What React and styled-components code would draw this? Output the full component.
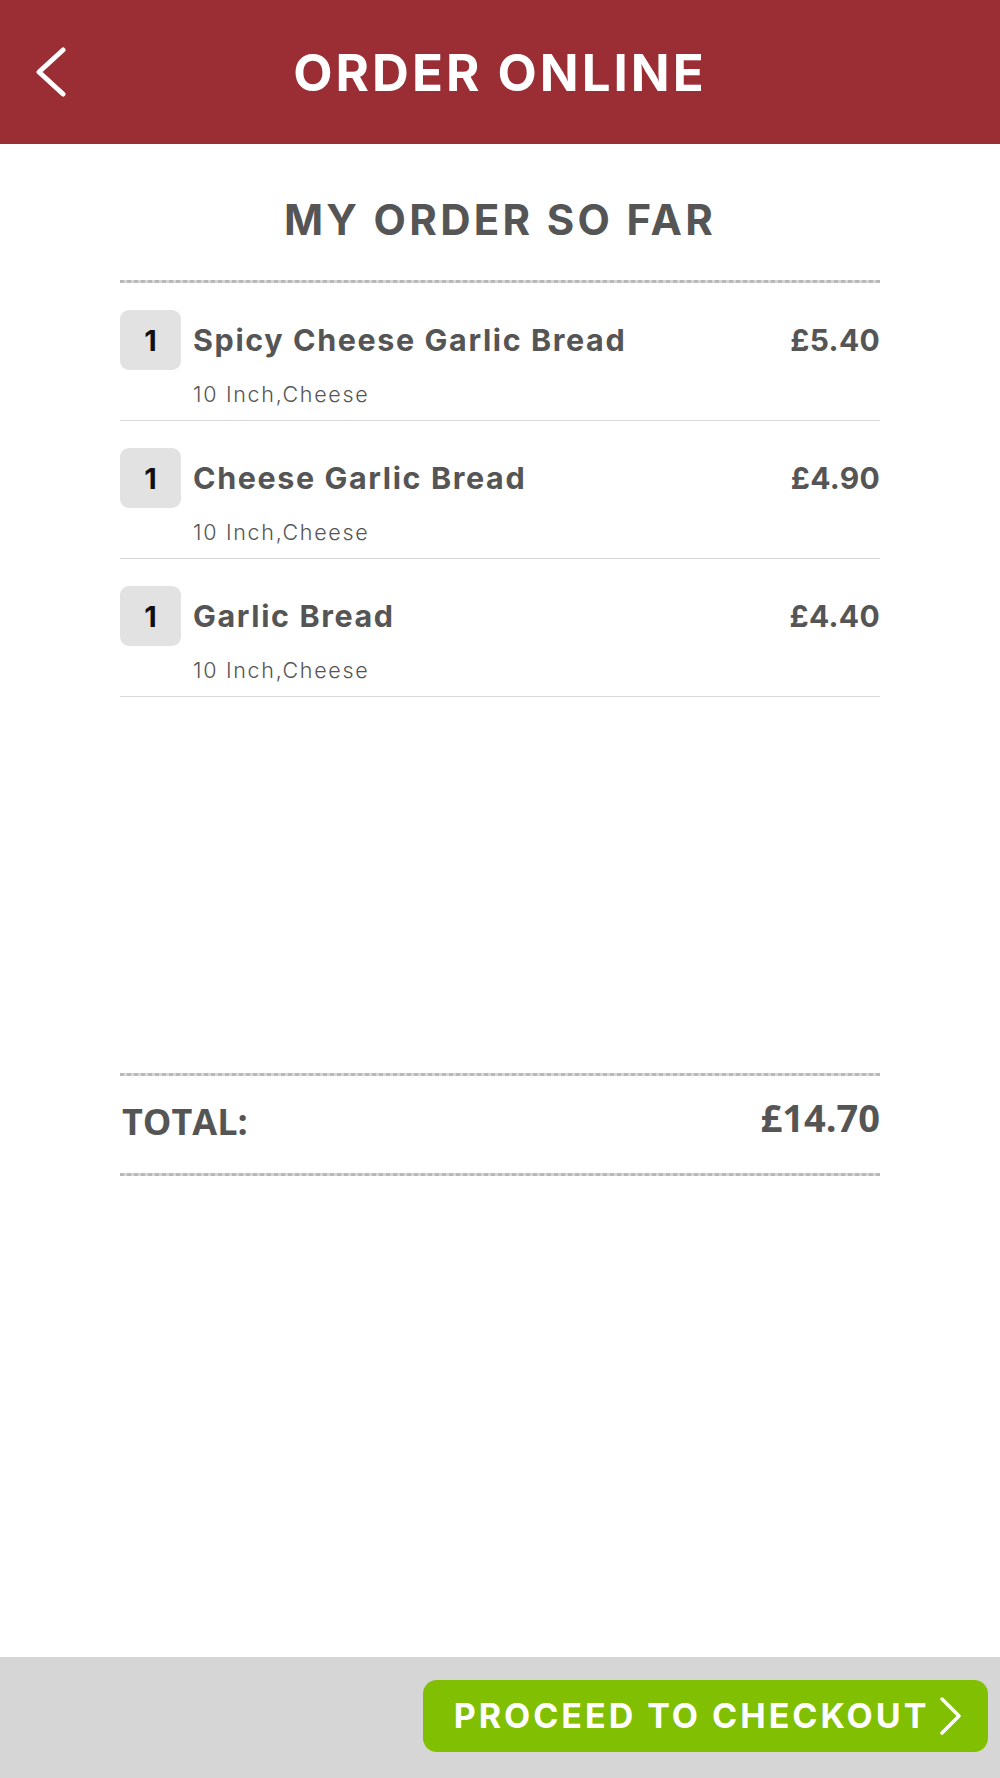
import React from "react";
import styled, { createGlobalStyle } from "styled-components";

const GlobalStyle = createGlobalStyle`
  html, body { margin: 0; padding: 0; background: #ffffff; }
  body { font-family: Inter, "Noto Sans", sans-serif; color: #555555; }
  * { box-sizing: border-box; }
`;

const Page = styled.div`
  min-height: 100vh;
  display: flex;
  flex-direction: column;
`;

const Header = styled.header`
  height: 144px;
  background: #9b2d35;
  display: grid;
  grid-template-columns: 1fr auto 1fr;
  align-items: center;
  padding: 0 36px;
`;

const BackButton = styled.button`
  justify-self: start;
  background: none;
  border: none;
  padding: 0;
  width: 30px;
  height: 50px;
  display: flex;
  cursor: pointer;
`;

const HeaderTitle = styled.h1`
  margin: 0;
  font-family: Inter, sans-serif;
  font-weight: 700;
  font-size: 51px;
  line-height: 60px;
  letter-spacing: 3px;
  color: #ffffff;
  padding-top: 2px;
`;

const Main = styled.main`
  flex: 1;
  padding: 0 120px;
  display: flex;
  flex-direction: column;
`;

const Dashed = styled.div`
  height: 3px;
  background: repeating-linear-gradient(
    to right,
    #b9b9b9 0px,
    #b9b9b9 4px,
    #d6d6d6 4px,
    #d6d6d6 7px
  );
`;

const Heading = styled.h2`
  margin: 0;
  padding: 46px 0 30px;
  text-align: center;
  font-family: Inter, sans-serif;
  font-weight: 700;
  font-size: 42px;
  line-height: 60px;
  letter-spacing: 3.3px;
  color: #555555;
`;

const ItemList = styled.ul`
  list-style: none;
  margin: 0;
  padding: 0;
  min-height: 790px;
`;

const Item = styled.li`
  display: grid;
  grid-template-columns: 61px 1fr auto;
  grid-template-rows: 60px auto;
  column-gap: 12px;
  row-gap: 11px;
  align-items: center;
  padding: 27px 0 13px;
  border-bottom: 1px solid #d8d8d8;
`;

const Qty = styled.div`
  width: 61px;
  height: 60px;
  border-radius: 9px;
  background: #e2e2e2;
  display: flex;
  align-items: center;
  justify-content: center;
  font-family: Inter, sans-serif;
  font-weight: 700;
  font-size: 29px;
  color: #111111;
`;

const ItemName = styled.div`
  font-family: Inter, sans-serif;
  font-weight: 650;
  font-size: 30.5px;
  line-height: 40px;
  letter-spacing: 1.6px;
  color: #555555;
`;

const Price = styled.div`
  font-family: Inter, sans-serif;
  font-weight: 700;
  font-size: 30px;
  line-height: 40px;
  color: #555555;
  letter-spacing: 0.3px;
`;

const Options = styled.div`
  grid-column: 2 / 4;
  font-family: Inter, sans-serif;
  font-weight: 300;
  font-size: 21.5px;
  line-height: 26px;
  letter-spacing: 1.7px;
  color: #555555;
`;

const TotalRow = styled.div`
  display: flex;
  justify-content: space-between;
  align-items: center;
  height: 97px;
`;

const TotalLabel = styled.div`
  font-family: "Open Sans", sans-serif;
  font-weight: 700;
  font-size: 36px;
  line-height: 44px;
  color: #555555;
  padding: 0 0 6px 2px;
`;

const TotalValue = styled.div`
  font-family: "Open Sans", sans-serif;
  font-weight: 700;
  font-size: 38px;
  line-height: 44px;
  color: #555555;
  padding-bottom: 15px;
`;

const Footer = styled.footer`
  height: 121px;
  background: #d6d6d6;
  display: flex;
  align-items: center;
  justify-content: flex-end;
  padding: 0 12px 4px 0;
`;

const CheckoutButton = styled.button`
  width: 565px;
  height: 72px;
  border: none;
  border-radius: 14px;
  background: #80bf02;
  display: flex;
  align-items: center;
  justify-content: center;
  gap: 10px;
  padding: 0 0 0 6px;
  cursor: pointer;
`;

const CheckoutLabel = styled.span`
  font-family: Inter, sans-serif;
  font-weight: 700;
  font-size: 34px;
  letter-spacing: 3px;
  color: #ffffff;
`;

const items = [
  { qty: 1, name: "Spicy Cheese Garlic Bread", price: "£5.40", options: "10 Inch,Cheese" },
  { qty: 1, name: "Cheese Garlic Bread", price: "£4.90", options: "10 Inch,Cheese" },
  { qty: 1, name: "Garlic Bread", price: "£4.40", options: "10 Inch,Cheese" },
];

export default function App() {
  return (
    <Page>
      <GlobalStyle />
      <Header>
        <BackButton aria-label="Back">
          <svg width="30" height="50" viewBox="0 0 30 50" fill="none">
            <path d="M27 3 L3 25 L27 47" stroke="#ffffff" strokeWidth="5" strokeLinecap="round" strokeLinejoin="round" />
          </svg>
        </BackButton>
        <HeaderTitle>ORDER ONLINE</HeaderTitle>
        <span />
      </Header>
      <Main>
        <Heading>MY ORDER SO FAR</Heading>
        <Dashed />
        <ItemList>
          {items.map((it) => (
            <Item key={it.name}>
              <Qty>{it.qty}</Qty>
              <ItemName>{it.name}</ItemName>
              <Price>{it.price}</Price>
              <Options>{it.options}</Options>
            </Item>
          ))}
        </ItemList>
        <Dashed />
        <TotalRow>
          <TotalLabel>TOTAL:</TotalLabel>
          <TotalValue>£14.70</TotalValue>
        </TotalRow>
        <Dashed />
      </Main>
      <Footer>
        <CheckoutButton>
          <CheckoutLabel>PROCEED TO CHECKOUT</CheckoutLabel>
          <svg width="24" height="38" viewBox="0 0 24 38" fill="none">
            <path d="M3 2 L20 19 L3 36" stroke="#ffffff" strokeWidth="3.5" strokeLinecap="round" strokeLinejoin="round" />
          </svg>
        </CheckoutButton>
      </Footer>
    </Page>
  );
}
